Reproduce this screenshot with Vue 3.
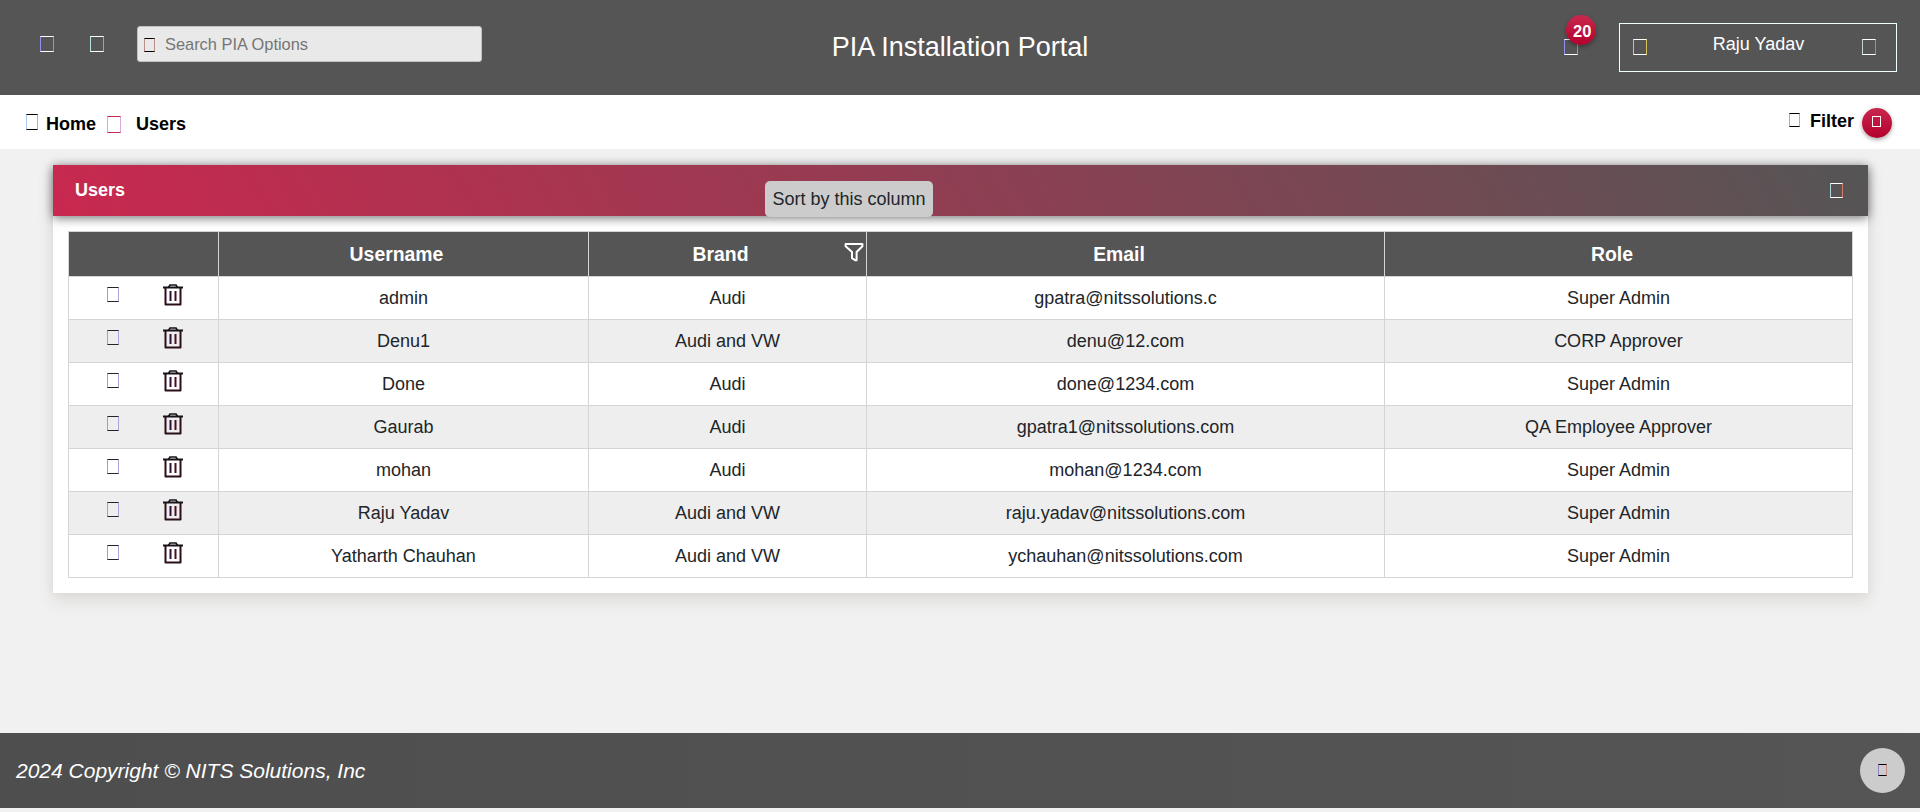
<script setup>
const users = [
  { name: 'admin', brand: 'Audi', email: 'gpatra@nitssolutions.c', role: 'Super Admin' },
  { name: 'Denu1', brand: 'Audi and VW', email: 'denu@12.com', role: 'CORP Approver' },
  { name: 'Done', brand: 'Audi', email: 'done@1234.com', role: 'Super Admin' },
  { name: 'Gaurab', brand: 'Audi', email: 'gpatra1@nitssolutions.com', role: 'QA Employee Approver' },
  { name: 'mohan', brand: 'Audi', email: 'mohan@1234.com', role: 'Super Admin' },
  { name: 'Raju Yadav', brand: 'Audi and VW', email: 'raju.yadav@nitssolutions.com', role: 'Super Admin' },
  { name: 'Yatharth Chauhan', brand: 'Audi and VW', email: 'ychauhan@nitssolutions.com', role: 'Super Admin' },
]
</script>

<template>
  <div class="page">
    <header class="topbar">
      <div class="left">
        <i class="box menu"></i>
        <i class="box home"></i>
        <label class="search">
          <i class="box"></i>
          <input type="text" placeholder="Search PIA Options" />
        </label>
      </div>
      <h1>PIA Installation Portal</h1>
      <div class="right">
        <div class="bell"><i class="box"></i><span class="badge">20</span></div>
        <div class="account">
          <i class="box avatar"></i>
          <span>Raju Yadav</span>
          <i class="box chevron"></i>
        </div>
      </div>
    </header>

    <nav class="crumbs">
      <i class="box house"></i>
      <b class="first">Home</b>
      <i class="box sep"></i>
      <b class="current">Users</b>
      <div class="filter">
        <i class="box funnel-box"></i>
        <b>Filter</b>
        <span class="round"><i class="box"></i></span>
      </div>
    </nav>

    <main>
      <section class="card">
        <div class="card-head">
          <b>Users</b>
          <i class="box"></i>
          <span class="tooltip">Sort by this column</span>
        </div>
        <div class="card-body">
          <table>
            <colgroup><col class="c1" /><col class="c2" /><col class="c3" /><col class="c4" /><col class="c5" /></colgroup>
            <thead>
              <tr>
                <th></th>
                <th>Username</th>
                <th>
                  <div class="brand">
                    <span>Brand</span>
                    <svg width="20" height="20" viewBox="0 0 20 20">
                      <path d="M1.6 2.1H18.4V4.2L12.6 10V18.2H11L8 16.2V10L1.6 4.2Z" fill="none" stroke="#fff" stroke-width="2" stroke-linejoin="round" />
                    </svg>
                  </div>
                </th>
                <th class="email">Email</th>
                <th class="role">Role</th>
              </tr>
            </thead>
            <tbody>
              <tr v-for="u in users" :key="u.name">
                <td>
                  <div class="actions">
                    <i class="box"></i>
                    <svg width="20" height="22" viewBox="0 0 20 22">
                      <g fill="none" stroke="#171219" stroke-width="2">
                        <path d="M0 3.5H20" />
                        <path d="M5.5 3.5L7 1H13L14.5 3.5" stroke-width="1.7" />
                        <path d="M2.5 4V20.4H17.5V4" stroke="#2a0f1a" stroke-linejoin="round" />
                      </g>
                      <path d="M7.5 7V17" stroke="#301038" stroke-width="2" />
                      <path d="M12.5 7V17" stroke="#45101c" stroke-width="2" />
                    </svg>
                  </div>
                </td>
                <td>{{ u.name }}</td>
                <td>{{ u.brand }}</td>
                <td>{{ u.email }}</td>
                <td>{{ u.role }}</td>
              </tr>
            </tbody>
          </table>
        </div>
      </section>
    </main>

    <footer>
      <em>2024 Copyright © NITS Solutions, Inc</em>
      <span class="up"><i class="box"></i></span>
    </footer>
  </div>
</template>

<style>
body { margin: 0; background: #f1f1f1; overflow: hidden; }
</style>

<style scoped>
* { box-sizing: border-box; }
.page {
  height: 812px;
  display: flex;
  flex-direction: column;
  background: #f1f1f1;
  font: 18px/20px "Liberation Sans", Arial, sans-serif;
  color: #212529;
}
.box {
  display: block;
  flex: none;
  width: 14px;
  height: 16px;
  border: 1px solid currentColor;
}
.topbar {
  height: 95px;
  flex: none;
  background: #555;
  color: #fff;
  display: grid;
  grid-template-columns: 1fr auto 1fr;
}
.left, .right { display: flex; align-items: flex-start; }
.menu { margin: 36px 0 0 40px; border-left-color: #8f8fec; border-right-color: #8f8fec; }
.home { margin: 36px 0 0 36px; border-left-color: #b9e0e0; border-right-color: #d09088; }
.search {
  width: 345px;
  height: 36px;
  margin: 26px 0 0 33px;
  padding: 0 6px;
  display: flex;
  background: #e9e9e9;
  border: 1px solid #c2c2c2;
  border-radius: 3px;
  color: #000;
}
.search .box { width: 11px; height: 14px; margin-top: 11px; border-left-color: #b98f88; border-right-color: #b98f88; }
.search input {
  flex: 1;
  min-width: 0;
  height: 34px;
  margin-left: 10px;
  padding: 0;
  border: 0;
  outline: 0;
  background: transparent;
  font: 16.4px "Liberation Sans", Arial, sans-serif;
}
.search input::placeholder { color: #757575; }
h1 { margin: 31px 0 0; font-size: 27px; line-height: 32px; font-weight: 400; white-space: nowrap; }
.right { justify-content: flex-end; }
.bell { position: relative; margin: 39px 41px 0 0; }
.bell .box { border-left-color: #8f8fec; border-right-color: #8f8fec; }
.badge {
  position: absolute;
  left: 2px;
  top: -24px;
  width: 30px;
  height: 30px;
  padding-left: 7px;
  border-radius: 50%;
  background: linear-gradient(#c9284f, #b3002d);
  box-shadow: 0 2px 4px rgba(0, 0, 0, .35);
  font: bold 16.5px/33px "Liberation Sans", Arial, sans-serif;
}
.account {
  width: 278px;
  height: 49px;
  margin: 23px 23px 0 0;
  padding: 0 20px 0 13px;
  border: 1px solid #f0ffff;
  display: flex;
  justify-content: space-between;
}
.account span { margin: 10px 0 0 8px; }
.account .box { margin-top: 15px; }
.avatar { border-left-color: #b5c6b0; border-right-color: #d6c060; }
.chevron { border-left-color: #bfd8d8; border-right-color: #a98983; }
.crumbs {
  height: 54px;
  flex: none;
  background: #fff;
  color: #000;
  display: flex;
  align-items: flex-start;
}
.crumbs > b { margin-top: 19px; }
.house { width: 12px; margin: 19px 0 0 26px; border-left-color: #a9c8ee; border-right-color: #c9a9a4; }
.first { margin-left: 8px; }
.sep { height: 17px; margin: 21px 0 0 11px; color: #c9284f; border-left-color: #e3a9b5; border-right-color: #dca9dc; }
.current { margin-left: 15px; }
.filter { margin-left: auto; padding-right: 28px; display: flex; align-items: flex-start; }
.funnel-box { width: 11px; height: 14px; margin-top: 18px; border-left-color: #c7a6a2; border-right-color: #c7a6a2; }
.filter b { margin: 16px 8px 0 10px; }
.round {
  width: 30px;
  height: 30px;
  margin-top: 13px;
  display: flex;
  padding: 8px 0 0 10px;
  border-radius: 50%;
  color: #fff;
  background: linear-gradient(#c9284f, #b3002d);
  box-shadow: 0 2px 4px rgba(0, 0, 0, .35);
}
.round .box { width: 9px; height: 11px; }
main { flex: 1; padding: 16px 52px 0 53px; }
.card { background: #fff; height: 428px; box-shadow: 0 8px 16px rgba(80, 60, 50, .11), 0 0 10px rgba(80, 60, 70, .07); }
.card-head {
  position: relative;
  height: 51px;
  padding: 0 25px 0 22px;
  display: flex;
  justify-content: space-between;
  align-items: flex-start;
  color: #fff;
  background: linear-gradient(60deg, #c9284f, #555);
  box-shadow: 0 2px 10px rgba(0, 0, 0, .55);
}
.card-head b { margin-top: 15px; }
.card-head .box { width: 13px; height: 15px; margin-top: 18px; border-left-color: #acd5df; border-right-color: #d37d6e; }
.tooltip {
  position: absolute;
  left: 712px;
  top: 16px;
  width: 168px;
  height: 36px;
  border-radius: 5px;
  background: #ccc;
  color: #212529;
  text-align: center;
  line-height: 36px;
  white-space: nowrap;
}
.card-body { padding: 15px 15px 0; }
table { width: 1785px; table-layout: fixed; border-collapse: collapse; text-align: center; }
.c1 { width: 150px; }
.c2 { width: 370px; }
.c3 { width: 278px; }
.c4 { width: 518px; }
.c5 { width: 468px; }
th, td { border: 1px solid #d5d5d5; padding: 0; }
th { height: 45px; background: #555; color: #fff; font-size: 19.4px; }
th.email, th.role { padding-right: 13px; }
th:nth-child(2) { padding-right: 14px; }
td { height: 43px; }
tbody tr:nth-child(even) { background: #eee; }
.brand { display: flex; align-items: center; }
.brand span { flex: 1; padding-left: 7px; }
.brand svg { display: block; margin: -4px 2px 0 -1px; }
.actions { display: flex; height: 42px; padding-left: 38px; }
.actions .box { width: 12px; height: 15px; margin-top: 10px; border-left-color: #b0a09b; border-right-color: #aaa6d6; }
.actions svg { display: block; margin: 7px 0 0 44px; }
footer {
  height: 75px;
  margin-bottom: 4px;
  padding: 0 15px 0 16px;
  flex: none;
  display: flex;
  align-items: center;
  justify-content: space-between;
  color: #fff;
  font-size: 21px;
  background: linear-gradient(90deg, #4e4e4e, #555);
}
.up {
  width: 45px;
  height: 45px;
  border-radius: 50%;
  background: #ccc;
  color: #000;
  display: flex;
  align-items: center;
  justify-content: center;
}
.up .box { width: 9px; height: 12px; margin-top: -1px; border-left-color: #8d84c0; border-right-color: #c78888; }
</style>
